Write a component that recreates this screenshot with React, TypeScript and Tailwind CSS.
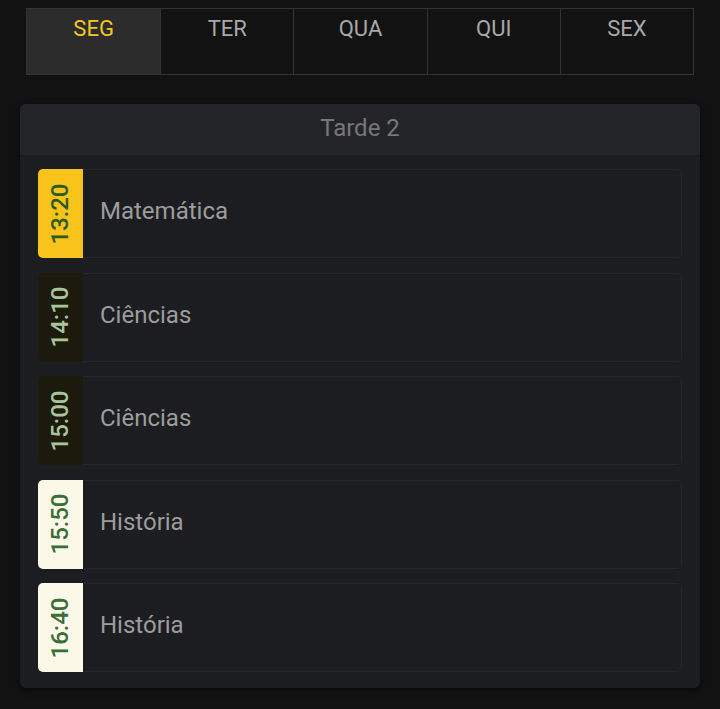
import React from "react";

const days = ["SEG", "TER", "QUA", "QUI", "SEX"];

type Item = { time: string; subject: string; badge: string; text: string };

const items: Item[] = [
  { time: "13:20", subject: "Matemática", badge: "bg-[#f8c31b]", text: "text-[#2d5a1f]" },
  { time: "14:10", subject: "Ciências", badge: "bg-[#1c1a0d]", text: "text-[#a8c49a]" },
  { time: "15:00", subject: "Ciências", badge: "bg-[#1c1a0d]", text: "text-[#a8c49a]" },
  { time: "15:50", subject: "História", badge: "bg-[#fbf8e8]", text: "text-[#3a6e3a]" },
  { time: "16:40", subject: "História", badge: "bg-[#fbf8e8]", text: "text-[#3a6e3a]" },
];

export default function App() {
  return (
    <div
      className="min-h-[709px] w-[720px] bg-[#121212] pt-2 pb-5"
      style={{ fontFamily: "Roboto, 'Liberation Sans', sans-serif" }}
    >
      <div className="mx-[26px] grid h-[67px] grid-cols-5 border border-[#333333]">
        {days.map((d, i) => (
          <div
            key={d}
            className={`flex justify-center pt-[6px] text-[22px] leading-[27px] ${
              i === 0 ? "bg-[#2c2c2c] text-[#f3c623]" : "bg-[#121212] text-[#a8a8a8]"
            } ${i > 0 ? "border-l border-[#333333]" : ""}`}
          >
            {d}
          </div>
        ))}
      </div>

      <div className="mx-5 mt-[29px] overflow-hidden rounded-md bg-[#1c1d20] shadow-[0_2px_6px_rgba(0,0,0,0.5)]">
        <div className="flex h-[51px] items-center justify-center bg-[#232428] pb-[3px] text-[24px] text-[#777777]">
          Tarde 2
        </div>
        <div className="flex flex-col gap-[14.5px] px-[18px] pt-[14px] pb-4">
          {items.map((it, i) => (
            <div
              key={i}
              className="flex h-[89px] rounded-[5px] border border-[#26272b] bg-[#1c1d20]"
            >
              <div
                className={`-m-px flex w-[45px] shrink-0 items-center justify-center rounded-l-[5px] ${it.badge}`}
              >
                <span
                  className={`-rotate-90 whitespace-nowrap text-[24px] font-medium ${it.text}`}
                >
                  {it.time}
                </span>
              </div>
              <div className="flex items-center pb-[5px] pl-[18px] text-[24px] text-[#9c9c9c]">
                {it.subject}
              </div>
            </div>
          ))}
        </div>
      </div>
    </div>
  );
}
